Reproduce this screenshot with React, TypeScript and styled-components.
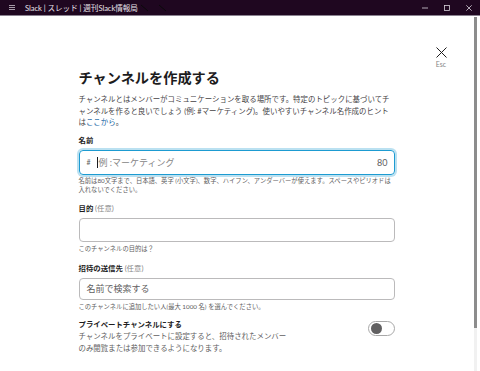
import React from "react";
import styled, { createGlobalStyle } from "styled-components";

const Global = createGlobalStyle`
  html, body { margin: 0; padding: 0; background: #fff; }
  body { font-family: Lato, "Noto Sans CJK JP", sans-serif; color: #1d1c1d; }
  * { box-sizing: border-box; }
`;

const Window = styled.div`
  width: 480px;
  height: 371px;
  display: flex;
  flex-direction: column;
  overflow: hidden;
  background: #fff;
`;

const TitleBar = styled.div`
  height: 16px;
  flex: none;
  background: #1f0720;
  border-bottom: 1px solid #8a8290;
  display: flex;
  align-items: center;
  padding: 0 0 0 9px;
  color: #e8e2ea;
`;

const TitleText = styled.span`
  font-size: 7.6px;
  margin-left: 10px;
  letter-spacing: -0.05px;
  white-space: nowrap;
`;

const Slashes = styled.svg`
  margin-left: 2px;
  flex: none;
`;

const WinControls = styled.div`
  margin-left: auto;
  display: flex;
  align-items: center;
`;

const WinButton = styled.div`
  width: 22px;
  height: 15px;
  display: flex;
  align-items: center;
  justify-content: center;
`;

const Body = styled.div`
  flex: 1;
  display: flex;
  min-height: 0;
`;

const Scroller = styled.div`
  flex: 1;
  display: grid;
  grid-template-columns: 1fr 316px 1fr;
  align-items: start;
  padding-top: 29px;
`;

const Track = styled.div`
  width: 7px;
  flex: none;
  display: flex;
  flex-direction: column;
  padding: 1px 3px 0 1px;
  background: #fff;
`;

const Thumb = styled.div`
  height: 311px;
  background: #8c8c8c;
  flex: none;
`;

const TrackRest = styled.div`
  flex: 1;
  background: #f1f1f1;
`;

const Content = styled.div`
  grid-column: 2;
  display: flex;
  flex-direction: column;
  padding-top: 23px;
`;

const CloseCol = styled.div`
  grid-column: 3;
  display: flex;
  justify-content: flex-end;
  padding: 2px 25px 0 0;
`;

const CloseBtn = styled.div`
  display: flex;
  flex-direction: column;
  align-items: center;
  width: 14px;
`;

const EscLabel = styled.span`
  font-size: 7px;
  line-height: 8px;
  color: #868686;
  margin-top: 2px;
`;

const Title = styled.h1`
  margin: 0;
  font-size: 14.2px;
  font-weight: 700;
  line-height: 20px;
  color: #1d1c1d;
`;

const Description = styled.p`
  margin: 6px 0 0;
  font-size: 7.45px;
  line-height: 11.6px;
  color: #454245;
`;

const Link = styled.span`
  color: #1264a3;
`;

const Field = styled.div<{ $top: number }>`
  display: flex;
  flex-direction: column;
  margin-top: ${(p) => p.$top}px;
`;

const Label = styled.div`
  font-size: 7.4px;
  font-weight: 700;
  line-height: 11px;
  color: #1d1c1d;
`;

const Optional = styled.span`
  font-weight: 400;
  color: #868686;
`;

const Input = styled.div<{ $focused?: boolean; $h: number }>`
  margin-top: 4px;
  height: ${(p) => p.$h}px;
  border-radius: 4px;
  border: 1px solid ${(p) => (p.$focused ? "#1d9bd1" : "#bbbabb")};
  box-shadow: ${(p) => (p.$focused ? "0 0 0 2px rgba(29,155,209,0.3)" : "none")};
  display: flex;
  align-items: center;
  padding: 0 6px 0 7px;
  font-size: 9px;
  color: #868686;
`;

const Hash = styled.span`
  font-size: 7px;
  color: #616061;
  margin-right: 6px;
`;

const Caret = styled.span`
  width: 1px;
  height: 11px;
  background: #1d1c1d;
  margin-right: 1px;
`;

const Counter = styled.span`
  margin-left: auto;
  color: #616061;
  font-size: 9px;
`;

const SearchText = styled.span`
  color: #616061;
`;

const Help = styled.div<{ $top: number }>`
  margin-top: ${(p) => p.$top}px;
  font-size: 6.3px;
  line-height: 9px;
  color: #616061;
`;

const ToggleRow = styled.div`
  margin-top: 8px;
  display: flex;
  justify-content: space-between;
  align-items: flex-start;
`;

const ToggleText = styled.div`
  display: flex;
  flex-direction: column;
`;

const ToggleDesc = styled.div`
  font-size: 7.45px;
  line-height: 12px;
  color: #616061;
  margin-top: 1.5px;
`;

const Switch = styled.div`
  width: 27px;
  height: 15px;
  border-radius: 8px;
  border: 1px solid #a8a8a8;
  background: #fff;
  display: flex;
  align-items: center;
  padding: 0 2px;
  margin-top: 2.5px;
`;

const Knob = styled.div`
  width: 11px;
  height: 11px;
  border-radius: 50%;
  background: #616061;
`;

export default function App() {
  return (
    <>
      <Global />
      <Window>
        <TitleBar>
          <svg width="6" height="5" viewBox="0 0 6 5">
            <path d="M0 0.5h6M0 2.5h6M0 4.5h6" stroke="#c9c2cc" strokeWidth="0.8" />
          </svg>
          <TitleText>Slack | スレッド | 週刊Slack情報局</TitleText>
          <Slashes width="30" height="10" viewBox="0 0 30 10">
            <path d="M1 2l7 6M19 2l7 6" stroke="#0a0a0a" strokeWidth="1" />
          </Slashes>
          <WinControls>
            <WinButton>
              <svg width="6" height="2" viewBox="0 0 6 2">
                <path d="M0 1h6" stroke="#d8d2da" strokeWidth="0.8" />
              </svg>
            </WinButton>
            <WinButton>
              <svg width="6" height="6" viewBox="0 0 6 6">
                <rect x="0.5" y="0.5" width="5" height="5" fill="none" stroke="#d8d2da" strokeWidth="0.8" />
              </svg>
            </WinButton>
            <WinButton>
              <svg width="6" height="6" viewBox="0 0 6 6">
                <path d="M0.3 0.3l5.4 5.4M5.7 0.3l-5.4 5.4" stroke="#d8d2da" strokeWidth="0.8" />
              </svg>
            </WinButton>
          </WinControls>
        </TitleBar>
        <Body>
          <Scroller>
            <Content>
              <Title>チャンネルを作成する</Title>
              <Description>
                チャンネルとはメンバーがコミュニケーションを取る場所です。特定のトピックに基づいてチャンネルを作ると良いでしょう (例: #マーケティング)。使いやすいチャンネル名作成のヒントは<Link>ここから</Link>。
              </Description>
              <Field $top={6}>
                <Label>名前</Label>
                <Input $focused $h={25}>
                  <Hash>#</Hash>
                  <Caret />
                  例 :マーケティング
                  <Counter>80</Counter>
                </Input>
                <Help $top={1.5}>
                  名前は80文字まで、日本語、英字 (小文字)、数字、ハイフン、アンダーバーが使えます。スペースやピリオドは入れないでください。
                </Help>
              </Field>
              <Field $top={9}>
                <Label>
                  目的 <Optional>(任意)</Optional>
                </Label>
                <Input $h={24} />
                <Help $top={1.5}>このチャンネルの目的は？</Help>
              </Field>
              <Field $top={10}>
                <Label>
                  招待の送信先 <Optional>(任意)</Optional>
                </Label>
                <Input $h={22}>
                  <SearchText>名前で検索する</SearchText>
                </Input>
                <Help $top={2}>このチャンネルに追加したい人(最大 1000 名) を選んでください。</Help>
              </Field>
              <ToggleRow>
                <ToggleText>
                  <Label>プライベートチャンネルにする</Label>
                  <ToggleDesc>
                    チャンネルをプライベートに設定すると、招待されたメンバー
                    <br />
                    のみ閲覧または参加できるようになります。
                  </ToggleDesc>
                </ToggleText>
                <Switch>
                  <Knob />
                </Switch>
              </ToggleRow>
            </Content>
            <CloseCol>
              <CloseBtn>
                <svg width="11" height="11" viewBox="0 0 11 11">
                  <path d="M0.5 0.5l10 10M10.5 0.5l-10 10" stroke="#1d1c1d" strokeWidth="1" />
                </svg>
                <EscLabel>Esc</EscLabel>
              </CloseBtn>
            </CloseCol>
          </Scroller>
          <Track>
            <Thumb />
            <TrackRest />
          </Track>
        </Body>
      </Window>
    </>
  );
}
